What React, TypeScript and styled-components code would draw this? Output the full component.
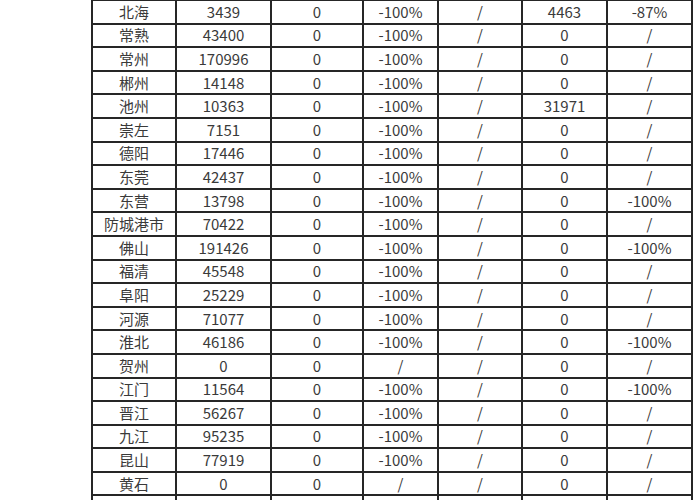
import styled, { createGlobalStyle } from 'styled-components';

const GlobalStyle = createGlobalStyle`
  html, body {
    margin: 0;
    padding: 0;
    background: #ffffff;
    overflow: hidden;
  }
`;

const Page = styled.div`
  width: 700px;
  height: 500px;
  overflow: hidden;
  background: #fff;
  padding-left: 91px;
  box-sizing: border-box;
`;

const Table = styled.table`
  border-collapse: collapse;
  table-layout: fixed;
  width: 601px;
  margin-top: -1px;
  font-family: "Noto Sans CJK SC", "Microsoft YaHei", sans-serif;
  font-size: 15px;
  color: #3a3a3a;
`;

const Cell = styled.td`
  border: 2px solid #262626;
  height: 21.6px;
  padding: 0;
  text-align: center;
  line-height: 20px;
  white-space: nowrap;
  overflow: hidden;
`;

const widths = [84, 95, 92, 75, 84, 85, 85];

const rows: string[][] = [
  ['北海', '3439', '0', '-100%', '/', '4463', '-87%'],
  ['常熟', '43400', '0', '-100%', '/', '0', '/'],
  ['常州', '170996', '0', '-100%', '/', '0', '/'],
  ['郴州', '14148', '0', '-100%', '/', '0', '/'],
  ['池州', '10363', '0', '-100%', '/', '31971', '/'],
  ['崇左', '7151', '0', '-100%', '/', '0', '/'],
  ['德阳', '17446', '0', '-100%', '/', '0', '/'],
  ['东莞', '42437', '0', '-100%', '/', '0', '/'],
  ['东营', '13798', '0', '-100%', '/', '0', '-100%'],
  ['防城港市', '70422', '0', '-100%', '/', '0', '/'],
  ['佛山', '191426', '0', '-100%', '/', '0', '-100%'],
  ['福清', '45548', '0', '-100%', '/', '0', '/'],
  ['阜阳', '25229', '0', '-100%', '/', '0', '/'],
  ['河源', '71077', '0', '-100%', '/', '0', '/'],
  ['淮北', '46186', '0', '-100%', '/', '0', '-100%'],
  ['贺州', '0', '0', '/', '/', '0', '/'],
  ['江门', '11564', '0', '-100%', '/', '0', '-100%'],
  ['晋江', '56267', '0', '-100%', '/', '0', '/'],
  ['九江', '95235', '0', '-100%', '/', '0', '/'],
  ['昆山', '77919', '0', '-100%', '/', '0', '/'],
  ['黄石', '0', '0', '/', '/', '0', '/'],
  ['', '', '', '', '', '', ''],
];

export default function App() {
  return (
    <Page>
      <GlobalStyle />
      <Table>
        <colgroup>
          {widths.map((w, i) => (
            <col key={i} style={{ width: w }} />
          ))}
        </colgroup>
        <tbody>
          {rows.map((r, i) => (
            <tr key={i}>
              {r.map((c, j) => (
                <Cell key={j}>{c}</Cell>
              ))}
            </tr>
          ))}
        </tbody>
      </Table>
    </Page>
  );
}
